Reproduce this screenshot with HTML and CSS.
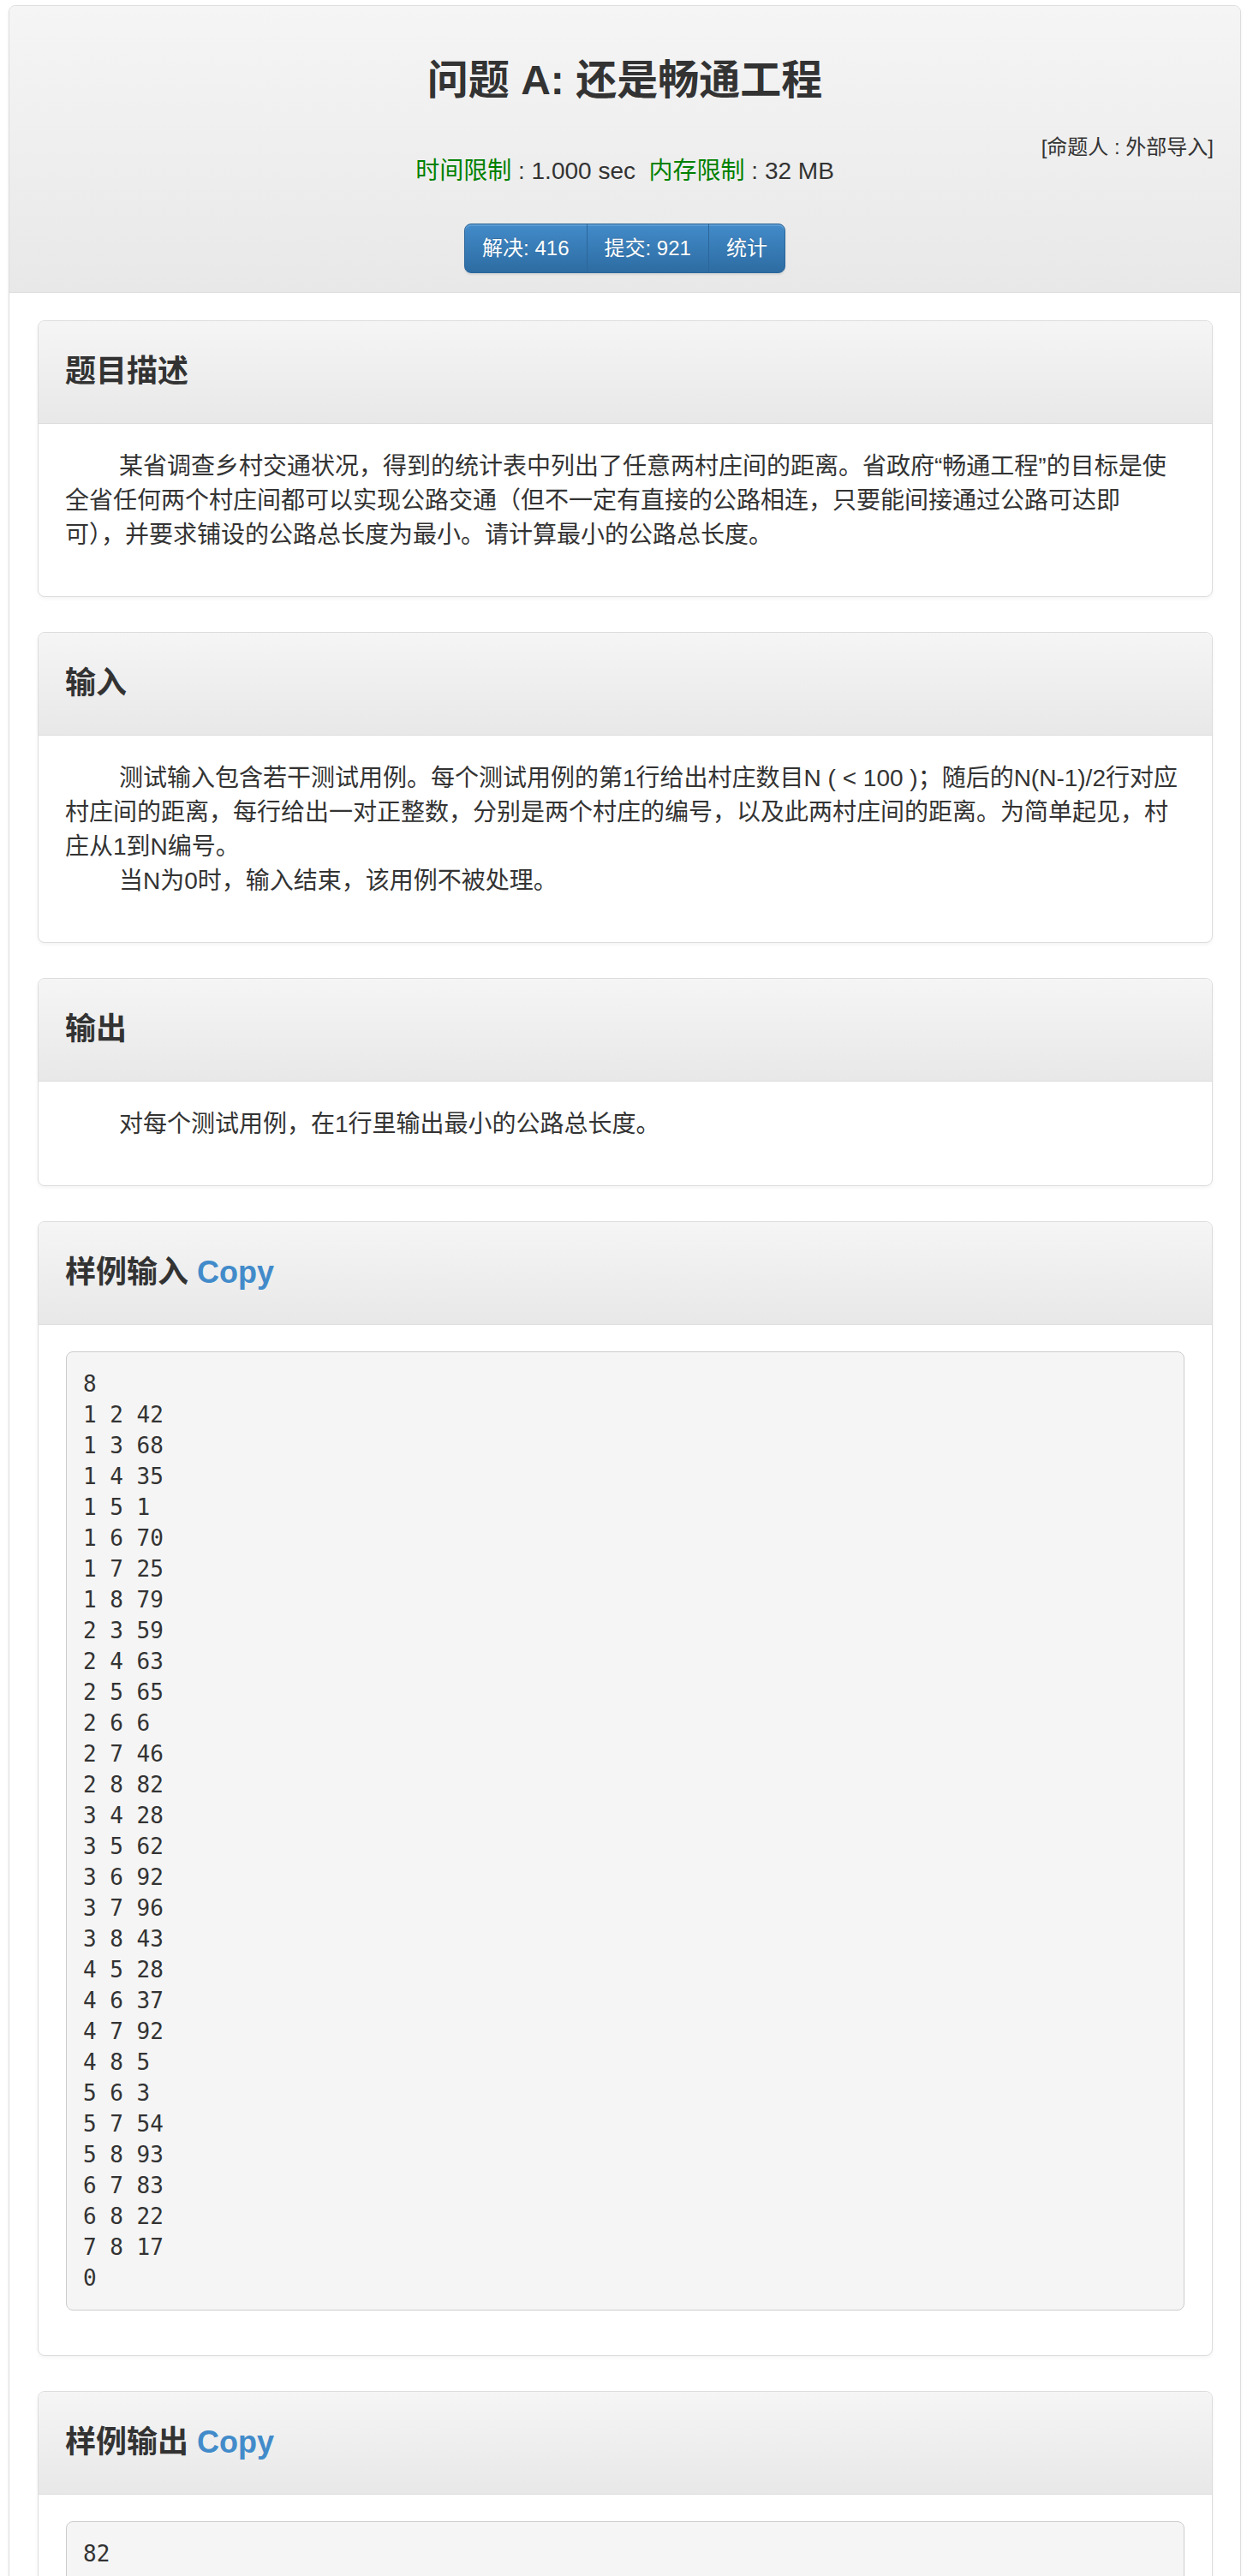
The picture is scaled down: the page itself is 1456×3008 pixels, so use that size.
FILE: index.html
```html
<!DOCTYPE html>
<html lang="zh-CN">
<head>
<meta charset="utf-8">
<title>问题 A: 还是畅通工程</title>
<link rel="stylesheet" href="styles.css">
</head>
<body>
<div class="problem">
  <div class="problem-head">
    <h1 class="problem-title">问题 A: 还是畅通工程</h1>
    <div class="meta">
      <span class="author">[命题人 : 外部导入]</span>
      <span class="limits"><span class="green">时间限制</span> : 1.000 sec&nbsp; <span class="green">内存限制</span> : 32 MB</span>
    </div>
    <div class="actions">
      <div class="btn-group">
        <a class="btn">解决: 416</a>
        <a class="btn">提交: 921</a>
        <a class="btn">统计</a>
      </div>
    </div>
  </div>
  <div class="problem-body">
    <section class="panel">
      <div class="panel-heading"><h4 class="panel-title">题目描述</h4></div>
      <div class="panel-body text">
        <p class="para">某省调查乡村交通状况，得到的统计表中列出了任意两村庄间的距离。省政府“畅通工程”的目标是使<br>全省任何两个村庄间都可以实现公路交通（但不一定有直接的公路相连，只要能间接通过公路可达即<br>可），并要求铺设的公路总长度为最小。请计算最小的公路总长度。</p>
      </div>
    </section>
    <section class="panel">
      <div class="panel-heading"><h4 class="panel-title">输入</h4></div>
      <div class="panel-body text">
        <p class="para">测试输入包含若干测试用例。每个测试用例的第1行给出村庄数目N ( &lt; 100 )；随后的N(N-1)/2行对应<br>村庄间的距离，每行给出一对正整数，分别是两个村庄的编号，以及此两村庄间的距离。为简单起见，村<br>庄从1到N编号。</p>
        <p class="para">当N为0时，输入结束，该用例不被处理。</p>
      </div>
    </section>
    <section class="panel">
      <div class="panel-heading"><h4 class="panel-title">输出</h4></div>
      <div class="panel-body text">
        <p class="para">对每个测试用例，在1行里输出最小的公路总长度。</p>
      </div>
    </section>
    <section class="panel">
      <div class="panel-heading"><h4 class="panel-title">样例输入 <a class="copy">Copy</a></h4></div>
      <div class="panel-body code">
<pre class="sample">8
1 2 42
1 3 68
1 4 35
1 5 1
1 6 70
1 7 25
1 8 79
2 3 59
2 4 63
2 5 65
2 6 6
2 7 46
2 8 82
3 4 28
3 5 62
3 6 92
3 7 96
3 8 43
4 5 28
4 6 37
4 7 92
4 8 5
5 6 3
5 7 54
5 8 93
6 7 83
6 8 22
7 8 17
0</pre>
      </div>
    </section>
    <section class="panel">
      <div class="panel-heading"><h4 class="panel-title">样例输出 <a class="copy">Copy</a></h4></div>
      <div class="panel-body code">
<pre class="sample">82</pre>
      </div>
    </section>
  </div>
</div>
</body>
</html>
```

FILE: styles.css
```css
html, body {
  background: #fff;
}
body {
  margin: 0;
  font-family: "Liberation Sans", "Noto Sans CJK SC", sans-serif;
  color: #333;
}
.problem {
  margin: 6px 0 0 10px;
  width: 1439px;
  box-sizing: border-box;
  border: 1px solid #ddd;
  border-radius: 8px;
  background: #fff;
  box-shadow: 0 2px 4px rgba(0, 0, 0, 0.05);
}
.problem-head {
  background: linear-gradient(to bottom, #f5f5f5 0, #e8e8e8 100%);
  border-bottom: 1px solid #ddd;
  border-radius: 7px 7px 0 0;
  padding: 61px 31px 22px;
  text-align: center;
}
.problem-title {
  margin: 0;
  font-size: 48px;
  line-height: 52px;
  font-weight: bold;
  color: #333;
}
.meta {
  display: grid;
  grid-template-columns: 1fr auto 1fr;
  margin-top: 35px;
}
.author {
  grid-column: 3;
  grid-row: 1;
  justify-self: end;
  align-self: start;
  font-size: 24px;
  line-height: 34px;
  color: #333;
}
.limits {
  grid-column: 2;
  grid-row: 1;
  margin-top: 25px;
  font-size: 28px;
  line-height: 40px;
  white-space: nowrap;
  color: #333;
}
.green {
  color: #008000;
}
.actions {
  margin-top: 41px;
  display: flex;
  justify-content: center;
}
.btn-group {
  display: flex;
  box-shadow: 0 2px 2px rgba(0, 0, 0, 0.08);
  border-radius: 8px;
}
.btn {
  display: block;
  font-size: 24px;
  line-height: 32px;
  padding: 12px 20px;
  color: #fff;
  background: linear-gradient(to bottom, #428bca 0, #2d6ca2 100%);
  border: 1px solid #2b669a;
  box-shadow: inset 0 2px 0 rgba(255, 255, 255, 0.15);
  text-shadow: 0 -1px 0 rgba(0, 0, 0, 0.2);
  white-space: nowrap;
}
.btn + .btn {
  margin-left: -1px;
}
.btn:first-child {
  border-radius: 8px 0 0 8px;
}
.btn:last-child {
  border-radius: 0 8px 8px 0;
}
.problem-body {
  padding: 32px 32px 1px 33px;
}
.panel {
  border: 1px solid #ddd;
  border-radius: 8px;
  background: #fff;
  box-shadow: 0 2px 4px rgba(0, 0, 0, 0.05);
  margin-bottom: 41px;
  overflow: hidden;
}
.panel-heading {
  background: linear-gradient(to bottom, #f5f5f5 0, #e8e8e8 100%);
  border-bottom: 1px solid #ddd;
  padding: 39px 31px 40px;
}
.panel-title {
  margin: 0;
  font-size: 36px;
  line-height: 40px;
  font-weight: bold;
  color: #333;
}
.copy {
  color: #428bca;
  text-decoration: none;
}
.panel-body.text {
  padding: 30px 32px 51px 31px;
  font-size: 28px;
  line-height: 40px;
}
.para {
  margin: 0;
  text-indent: 63px;
}
.panel-body.code {
  padding: 31px 32px 32px;
}
.sample {
  margin: 0 0 20px;
  padding: 19px 19px;
  border: 1px solid #ccc;
  border-radius: 8px;
  background: #f5f5f5;
  font-family: "DejaVu Sans Mono", "Liberation Mono", monospace;
  font-size: 26px;
  line-height: 36px;
  color: #333;
  white-space: pre;
}
```
